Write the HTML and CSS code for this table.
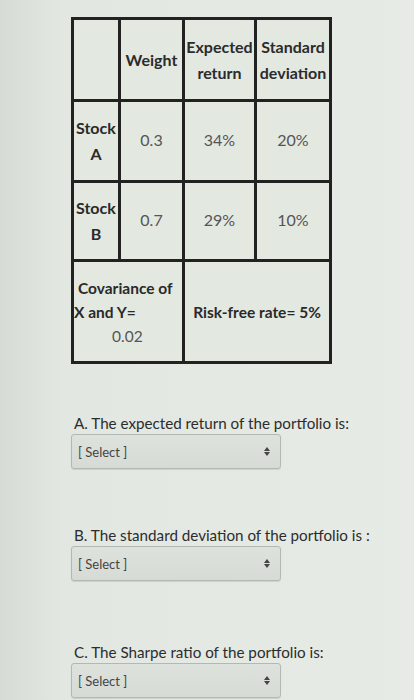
FILE: index.html
```html
<!DOCTYPE html>
<html>
<head>
<meta charset="utf-8">
<link rel="stylesheet" href="styles.css">
</head>
<body>
<div class="page">
  <div class="grid">
    <div class="cell"></div>
    <div class="cell head">Weight</div>
    <div class="cell head">Expected<br>return</div>
    <div class="cell head">Standard<br>deviation</div>

    <div class="cell stock"><span class="s">Stock</span><span class="l">A</span></div>
    <div class="cell num">0.3</div>
    <div class="cell num">34%</div>
    <div class="cell num">20%</div>

    <div class="cell stock"><span class="s">Stock</span><span class="l">B</span></div>
    <div class="cell num">0.7</div>
    <div class="cell num">29%</div>
    <div class="cell num">10%</div>

    <div class="cell cov span2">
      <span class="c1">Covariance of</span>
      <span class="c2">X and Y=</span>
      <span class="c3">0.02</span>
    </div>
    <div class="cell rf span2">Risk-free rate= 5%</div>
  </div>

  <div class="q qa">
    <p class="label">A. The expected return of the portfolio is:</p>
    <div class="select"><span>[ Select ]</span><span class="arrows"><i class="up"></i><i class="down"></i></span></div>
  </div>
  <div class="q qb">
    <p class="label">B. The standard deviation of the portfolio is :</p>
    <div class="select"><span>[ Select ]</span><span class="arrows"><i class="up"></i><i class="down"></i></span></div>
  </div>
  <div class="q qc">
    <p class="label">C. The Sharpe ratio of the portfolio is:</p>
    <div class="select"><span>[ Select ]</span><span class="arrows"><i class="up"></i><i class="down"></i></span></div>
  </div>
</div>
</body>
</html>
```

FILE: styles.css
```css
* { box-sizing: border-box; }
html, body {
  margin: 0;
  padding: 0;
  background: #e2e7e1;
  font-family: Lato, "Open Sans", sans-serif;
  color: #2a2a2a;
}
.page {
  width: 414px;
  height: 700px;
  overflow: hidden;
  padding: 17px 0 0 71px;
  background: linear-gradient(90deg, #d7dbd6 0, #e2e7e1 60px, #e6ebe5 100%);
}
.grid {
  display: grid;
  grid-template-columns: 44px 61px 69px 72px;
  grid-template-rows: 79px 78px 76px 99px;
  gap: 3px;
  padding: 3px;
  width: fit-content;
  background: #222;
}
.cell {
  background: #e3e8e1;
  display: flex;
  align-items: center;
  justify-content: center;
  text-align: center;
  font-size: 16px;
  line-height: 26px;
  white-space: nowrap;
}
.head { font-weight: 700; color: #2b2b2b; }
.num { color: #555; padding-bottom: 2px; }
.stock {
  flex-direction: column;
  align-items: stretch;
  font-weight: 700;
}
.stock .s { text-align: left; padding-left: 2px; }
.stock .l { text-align: center; }
.span2 { grid-column: span 2; }
.cov {
  flex-direction: column;
  align-items: stretch;
  text-align: left;
  line-height: 24px;
  font-weight: 700;
  font-size: 15.5px;
}
.cov .c1 { padding-left: 4px; }
.cov .c2 { padding-left: 0; }
.cov .c3 { padding-left: 38px; font-weight: 400; color: #555; }
.rf { font-weight: 700; font-size: 15.5px; }

.q { margin: 0; }
.label {
  margin: 0;
  font-size: 15.2px;
  line-height: 16px;
  color: #2c2c2c;
  padding-left: 3px;
}
.qa { margin-top: 51px; }
.qb { margin-top: 58px; }
.qc { margin-top: 63px; }
.select {
  margin-top: 3px;
  width: 210px;
  height: 35px;
  border: 1px solid #b3b8b2;
  border-radius: 3px;
  background: linear-gradient(180deg, #dde2dc, #d6dbd5);
  box-shadow: 0 1px 1px rgba(0,0,0,0.1);
  display: flex;
  align-items: center;
  justify-content: space-between;
  padding: 0 10px 0 6px;
  font-size: 13px;
  color: #444;
}
.arrows {
  display: flex;
  flex-direction: column;
  gap: 1px;
}
.arrows i {
  display: block;
  width: 0;
  height: 0;
  border-left: 3px solid transparent;
  border-right: 3px solid transparent;
}
.arrows .up { border-bottom: 4px solid #444; }
.arrows .down { border-top: 4px solid #444; }
```
